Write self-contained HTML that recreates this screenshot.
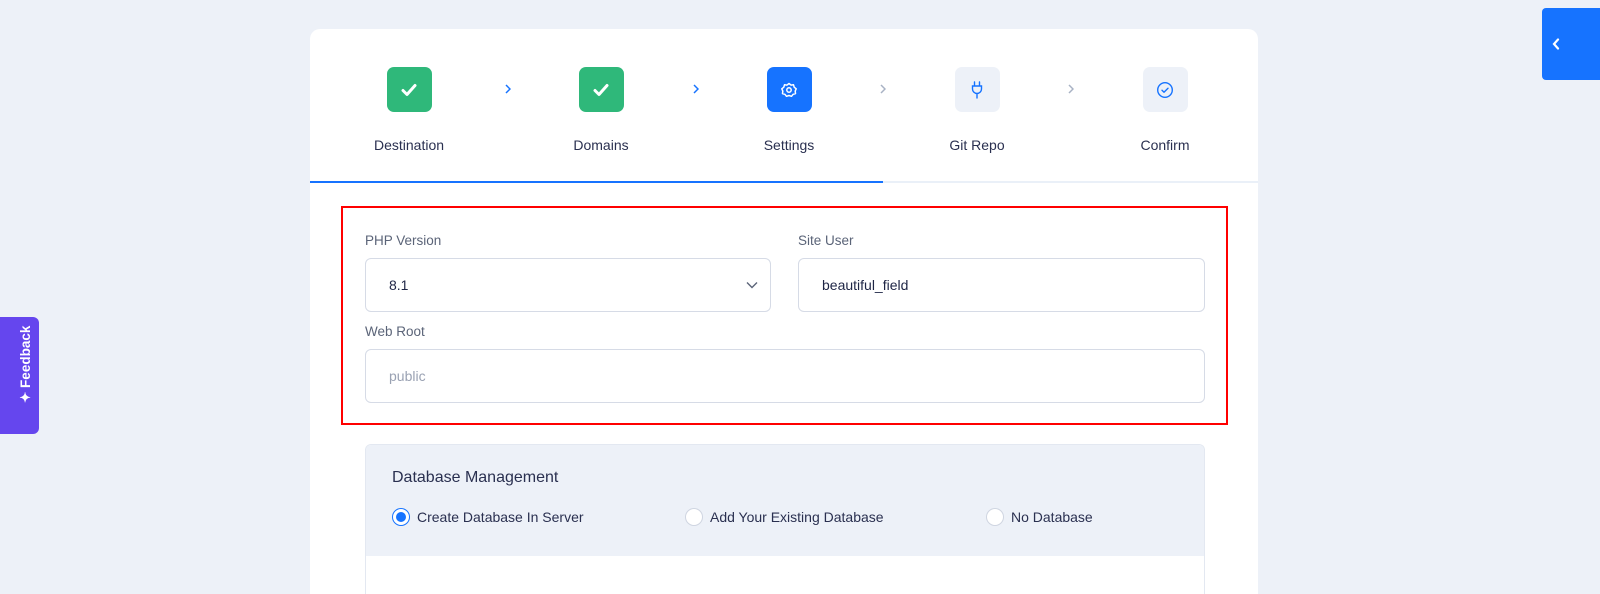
<!DOCTYPE html>
<html style="overflow:hidden;width:1600px;height:594px"><head><meta charset="utf-8"><style>
*{box-sizing:border-box;margin:0;padding:0}
body{width:1600px;height:594px;overflow:hidden;background:#edf1f8;font-family:"Liberation Sans",sans-serif;position:relative;color:#1e2545}
.card{position:absolute;left:310px;top:29px;width:948px;height:565px;background:#fff;border-radius:10px 10px 0 0}
.step{position:absolute;top:38px;width:120px;margin-left:-60px;text-align:center}
.ic{width:45px;height:45px;border-radius:7px;margin:0 auto;display:flex;align-items:center;justify-content:center}
.lbl{margin-top:25px;font-size:14px;color:#2a3050}
.arr{position:absolute;top:55px}
.line{position:absolute;top:152px;left:0;width:948px;height:2px;background:#eaf0f8}
.line b{display:block;width:573px;height:2px;background:#1673ff}
.red{position:absolute;left:341px;top:206px;width:887px;height:219px;border:2px solid #f00}
.fl{position:absolute;font-size:13.5px;color:#5b6478}
.inp{position:absolute;border:1px solid #d6dbe6;border-radius:6px;height:54px;font-size:14px;padding-left:23px;line-height:52px;color:#1e2545}
.db{position:absolute;left:365px;top:444px;width:840px;height:150px;border:1px solid #e3e8f1;border-bottom:none;border-radius:6px 6px 0 0;background:#fff;overflow:hidden}
.dbh{height:111px;background:#edf1f8;padding:24px 26px}
.r{position:absolute;top:63px;font-size:14px;display:flex;align-items:center;gap:7px;color:#2a3050}
.rc{width:18px;height:18px;border-radius:50%;border:1px solid #cfd5e1;background:#fff}
</style></head><body>
<div class="card">
  <div class="step" style="left:99px"><div class="ic" style="background:#2fb87a"><svg width="16" height="14" viewBox="0 0 16 14"><path d="M2 7.5l4 4 8-9" stroke="#fff" stroke-width="3" fill="none" stroke-linecap="round" stroke-linejoin="round"/></svg></div><div class="lbl">Destination</div></div>
  <svg class="arr" style="left:195px" width="6" height="10" viewBox="0 0 6 10"><path d="M1 1l4 4-4 4" stroke="#1673ff" stroke-width="1.5" fill="none"/></svg>
  <div class="step" style="left:291px"><div class="ic" style="background:#2fb87a"><svg width="16" height="14" viewBox="0 0 16 14"><path d="M2 7.5l4 4 8-9" stroke="#fff" stroke-width="3" fill="none" stroke-linecap="round" stroke-linejoin="round"/></svg></div><div class="lbl">Domains</div></div>
  <svg class="arr" style="left:383px" width="6" height="10" viewBox="0 0 6 10"><path d="M1 1l4 4-4 4" stroke="#1673ff" stroke-width="1.5" fill="none"/></svg>
  <div class="step" style="left:479px"><div class="ic" style="background:#1673ff"><svg width="16" height="16" viewBox="0 0 16 16"><path d="M8 1.5l2 1.6 2.5-.3.7 2.4 2 1.6-1 2.3.3 2.5-2.4.7-1.6 2L8 13.5 5.5 14.3l-1.6-2-2.4-.7.3-2.5-1-2.3 2-1.6.7-2.4 2.5.3z" stroke="#fff" stroke-width="1.5" fill="none" stroke-linejoin="round"/><circle cx="8" cy="8" r="2.2" stroke="#fff" stroke-width="1.5" fill="none"/></svg></div><div class="lbl">Settings</div></div>
  <svg class="arr" style="left:570px" width="6" height="10" viewBox="0 0 6 10"><path d="M1 1l4 4-4 4" stroke="#a8b2c4" stroke-width="1.5" fill="none"/></svg>
  <div class="step" style="left:667px"><div class="ic" style="background:#edf1f8"><svg width="14" height="18" viewBox="0 0 14 18"><path d="M4.5 1v4M9.5 1v4M2.5 5h9v3a4.5 4.5 0 0 1-9 0zM7 12.5V17" stroke="#1673ff" stroke-width="1.4" fill="none" stroke-linecap="round"/></svg></div><div class="lbl">Git Repo</div></div>
  <svg class="arr" style="left:758px" width="6" height="10" viewBox="0 0 6 10"><path d="M1 1l4 4-4 4" stroke="#a8b2c4" stroke-width="1.5" fill="none"/></svg>
  <div class="step" style="left:855px"><div class="ic" style="background:#edf1f8"><svg width="18" height="18" viewBox="0 0 18 18"><circle cx="9" cy="9" r="7.3" stroke="#1673ff" stroke-width="1.4" fill="none"/><path d="M6 9.2l2 2 4-4" stroke="#1673ff" stroke-width="1.4" fill="none" stroke-linecap="round" stroke-linejoin="round"/></svg></div><div class="lbl">Confirm</div></div>
  <div class="line"><b></b></div>
</div>
<div class="red"></div>
<div class="fl" style="left:365px;top:233px">PHP Version</div>
<div class="fl" style="left:798px;top:233px">Site User</div>
<div class="inp" style="left:365px;top:258px;width:406px">8.1<svg style="position:absolute;right:12px;top:22px" width="12" height="8" viewBox="0 0 12 8"><path d="M1 1.5l5 5 5-5" stroke="#5b6478" stroke-width="1.4" fill="none"/></svg></div>
<div class="inp" style="left:798px;top:258px;width:407px">beautiful_field</div>
<div class="fl" style="left:365px;top:324px">Web Root</div>
<div class="inp" style="left:365px;top:349px;width:840px;color:#9aa2b3">public</div>
<div class="db"><div class="dbh"><div style="font-size:16px;color:#2a3050">Database Management</div></div>
  <div class="r" style="left:26px"><span class="rc" style="border:1.5px solid #1673ff;display:flex;align-items:center;justify-content:center"><span style="width:10px;height:10px;border-radius:50%;background:#1673ff"></span></span>Create Database In Server</div>
  <div class="r" style="left:319px"><span class="rc"></span>Add Your Existing Database</div>
  <div class="r" style="left:620px"><span class="rc"></span>No Database</div>
</div>
<div style="position:absolute;left:0;top:317px;width:39px;height:117px;background:#6546ee;border-radius:0 6px 6px 0"><div style="position:absolute;left:28px;top:14px;transform:rotate(-90deg);transform-origin:0 0;translate:-10px 72px;color:#fff;font-weight:bold;font-size:13.5px;white-space:nowrap">✦ Feedback</div></div>
<div style="position:absolute;left:1542px;top:8px;width:58px;height:72px;background:#1673ff;border-radius:4px 0 0 4px"><svg style="position:absolute;left:10px;top:30px" width="8" height="12" viewBox="0 0 8 12"><path d="M6 1.5L2 6l4 4.5" stroke="#fff" stroke-width="2.2" fill="none" stroke-linecap="round"/></svg></div>
</body></html>
